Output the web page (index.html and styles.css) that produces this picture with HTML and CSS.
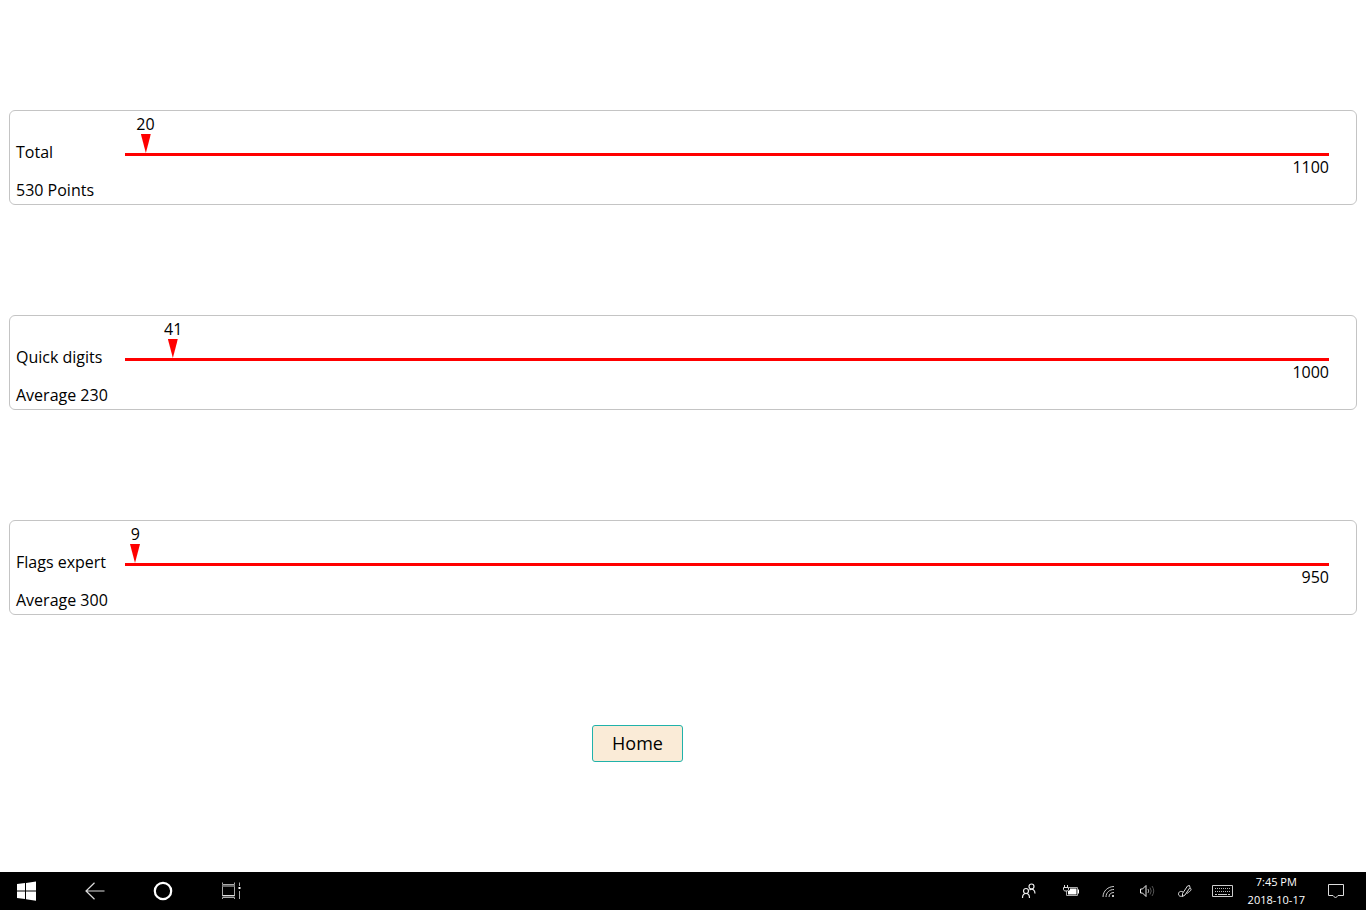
FILE: index.html
```html
<!DOCTYPE html>
<html lang="en">
<head>
<meta charset="utf-8">
<title>Results</title>
<link rel="stylesheet" href="styles.css">
</head>
<body>
<main class="results">
  <section class="card">
    <div class="labels"><p>Total</p><p>530 Points</p></div>
    <div class="scale">
      <div class="marker-row"><div class="marker" style="left:1.7%"><span>20</span><svg class="arrow" viewBox="0 0 10 19"><path d="M0 0h10L5 19z"/></svg></div></div>
      <div class="line"></div>
      <p class="max">1100</p>
    </div>
  </section>
  <section class="card">
    <div class="labels"><p>Quick digits</p><p>Average 230</p></div>
    <div class="scale">
      <div class="marker-row"><div class="marker" style="left:4%"><span>41</span><svg class="arrow" viewBox="0 0 10 19"><path d="M0 0h10L5 19z"/></svg></div></div>
      <div class="line"></div>
      <p class="max">1000</p>
    </div>
  </section>
  <section class="card">
    <div class="labels"><p>Flags expert</p><p>Average 300</p></div>
    <div class="scale">
      <div class="marker-row"><div class="marker" style="left:0.85%"><span>9</span><svg class="arrow" viewBox="0 0 10 19"><path d="M0 0h10L5 19z"/></svg></div></div>
      <div class="line"></div>
      <p class="max">950</p>
    </div>
  </section>
  <button class="home" type="button">Home</button>
</main>
<footer class="taskbar">
  <div class="nav">
    <button type="button" aria-label="Start"><svg width="20" height="20" viewBox="0 0 20 20"><path fill="#fff" d="M0 3l8-1v7.500H0zM9 1.900L19 .4v9.100H9zM0 10.500h8V18l-8-1zM9 10.500h10v9.300L9 18.200z"/></svg></button>
    <button type="button" aria-label="Back"><svg width="20" height="20" viewBox="0 0 20 20"><path d="M19.500 10H1M9.500 1.800L1 10l8.500 8.200" fill="none" stroke="#ddd" stroke-width="1.200"/></svg></button>
    <button type="button" aria-label="Cortana"><svg width="20" height="20" viewBox="0 0 20 20"><circle cx="10" cy="10" r="8.200" fill="none" stroke="#fff" stroke-width="2.200"/></svg></button>
    <button type="button" aria-label="Task view"><svg width="20" height="20" viewBox="0 0 20 20"><g fill="none" stroke="#aaa"><path d="M1.500 1.500v2h12v-2M1.500 4v11h12V4M1.500 18v-1.500h12V18M18.500 1.500V5M18.500 10v8"/><path d="M1.500 5h12" stroke="#666" stroke-width="2"/><path d="M1.500 14.500h12" stroke="#ddd"/></g><path fill="#fff" d="M17.500 6h2v2h-2z"/></svg></button>
  </div>
  <div class="tray">
    <button type="button" class="people" aria-label="People"><svg width="16" height="16" viewBox="0 0 16 16" fill="none" stroke="#eee" stroke-width="1.200"><circle cx="10.500" cy="3.500" r="2.500"/><circle cx="5" cy="8" r="2.500"/><path d="M1.500 15c0-6 7-6 7 0M8.500 7c3-2 5.500 0 5.500 3.500"/></svg></button>
    <button type="button" aria-label="Battery"><svg width="16" height="16" viewBox="0 0 16 16"><path d="M3.500 8v4.500h11v-8H6" fill="none" stroke="#aaa"/><path fill="#fff" d="M7 5.500h6.500v6H5V8l2-1zM15 6.500h1v4h-1z"/><path d="M1.500 2v2.500M4.500 2v2.500M.5 4.500h5v2c0 1-1 1.500-2.500 1.500S.5 7.500.5 6.500z" stroke="#ddd" fill="#000"/></svg></button>
    <button type="button" aria-label="Network"><svg width="16" height="16" viewBox="0 0 16 16" fill="none" stroke="#ccc"><path d="M2 14C2 8 7 3.500 13 3.500M5 14c0-4.500 3.500-7.500 8-7.500M8 14c0-3 2-4.500 5-4.500"/><circle cx="12" cy="13" r="1" fill="#fff" stroke="none"/></svg></button>
    <button type="button" aria-label="Volume"><svg width="16" height="16" viewBox="0 0 16 16" fill="none"><path d="M1.500 6v4h2l3.500 3.500v-11L3.500 6z" stroke="#eee"/><path d="M9 6q1.500 2 0 4" stroke="#aaa"/><path d="M11 4.500q2.500 3.500 0 7M13 3q3.500 5 0 10" stroke="#555"/></svg></button>
    <button type="button" aria-label="Pen"><svg width="16" height="16" viewBox="0 0 16 16" fill="none" stroke="#ddd"><path d="M5.500 10.500L10.500 3l2-.5.500 2L8 12l-2.500 1.500z"/><path d="M6 9C3.500 7.500 1.500 9 1.500 11c0 2.500 3 3 4.500 1.500M9.500 10c1 1 2-1 3-1.500 2-1 2-3 .5-3.500"/></svg></button>
    <button type="button" class="keyboard" aria-label="Touch keyboard"><svg width="22" height="16" viewBox="0 0 22 16" fill="none" stroke="#ccc"><path d="M.5 2.500h20v11H.5z"/><path d="M3 5.500h15M3 8.500h15" stroke="#bbb" stroke-dasharray="1 1"/><path d="M3 11.500h2M6 11.500h9M16 11.500h2"/></svg></button>
    <div class="clock"><time>7:45 PM</time><time>2018-10-17</time></div>
    <button type="button" class="notices" aria-label="Notifications"><svg width="16" height="16" viewBox="0 0 16 16"><path d="M.5 1.500h15v11H10L7.500 15 5 12.500H.5z" fill="none" stroke="#ddd"/></svg></button>
  </div>
</footer>
</body>
</html>
```
FILE: styles.css
```css
* { box-sizing: border-box; }
body {
  margin: 0;
  min-height: 100vh;
  display: flex;
  flex-direction: column;
  background: #fff;
  color: #000;
  font: 16px/22px "Open Sans", "Noto Sans", sans-serif;
}
p { margin: 0; }
.results {
  flex: 1;
  display: flex;
  flex-direction: column;
  justify-content: space-evenly;
  padding: 0 9px;
}
.card {
  display: grid;
  grid-template-columns: 109px 1fr;
  padding: 3px 27px 3px 6px;
  border: 1px solid #c4c4c4;
  border-radius: 6px;
}
.labels {
  display: flex;
  flex-direction: column;
  gap: 16px;
  padding-top: 27px;
}
.marker-row {
  position: relative;
  height: 39px;
}
.marker {
  position: absolute;
  top: 0;
  display: flex;
  flex-direction: column;
  align-items: center;
  line-height: 20px;
  transform: translateX(-50%);
}
.arrow {
  width: 10px;
  height: 19px;
  fill: #f00;
}
.line {
  height: 3px;
  background: #f00;
}
.max { text-align: right; }
.home {
  align-self: center;
  margin-right: 91px;
  padding: 5px 19px;
  border: 1px solid #20b2aa;
  border-radius: 3px;
  background: #faebd7;
  color: #000;
  font: 18px/25px "Open Sans", "Noto Sans", sans-serif;
}
.taskbar {
  display: flex;
  justify-content: space-between;
  align-items: center;
  height: 38px;
  padding: 0 22px 0 17px;
  background: #000;
  color: #fff;
}
.taskbar button {
  display: flex;
  padding: 0;
  border: 0;
  background: none;
}
.nav {
  display: flex;
  gap: 48px;
}
.tray {
  display: flex;
  align-items: center;
  gap: 22px;
}
.tray .people { margin-right: 4px; }
.tray .keyboard { margin-left: -3px; }
.clock {
  display: flex;
  flex-direction: column;
  align-items: center;
  margin: 0 1px 0 -8px;
  font-size: 11px;
  line-height: 18px;
}
```
